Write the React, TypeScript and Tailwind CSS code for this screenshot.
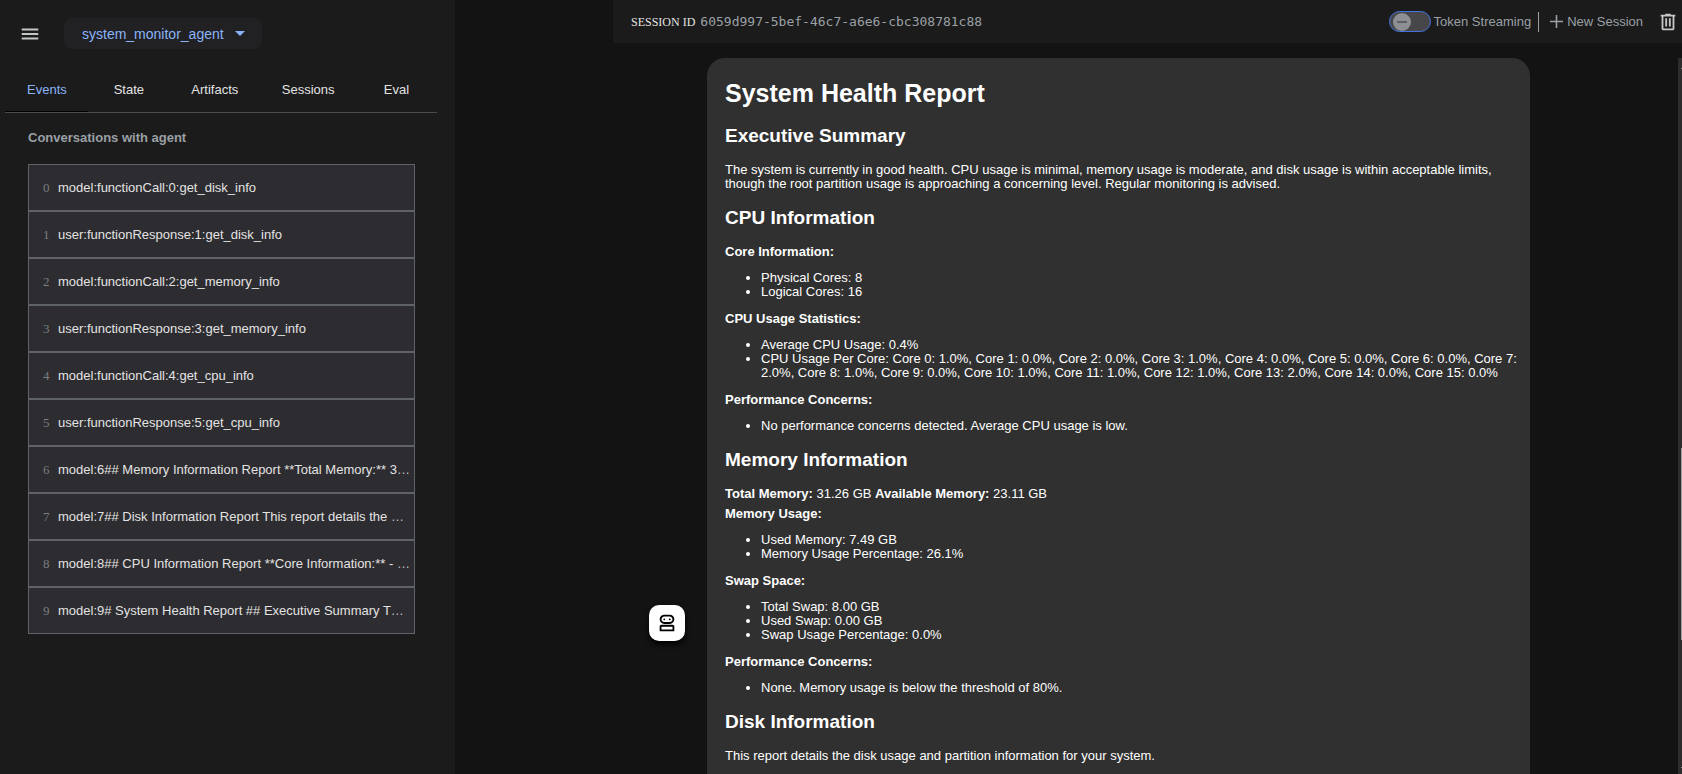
import type { ReactNode } from "react";

const tabs = ["Events", "State", "Artifacts", "Sessions", "Eval"];

const events = [
  { text: "model:functionCall:0:get_disk_info" },
  { text: "user:functionResponse:1:get_disk_info" },
  { text: "model:functionCall:2:get_memory_info" },
  { text: "user:functionResponse:3:get_memory_info" },
  { text: "model:functionCall:4:get_cpu_info" },
  { text: "user:functionResponse:5:get_cpu_info" },
  { text: "model:6## Memory Information Report **Total Memory:** 3", more: true },
  { text: "model:7## Disk Information Report This report details the ", more: true },
  { text: "model:8## CPU Information Report **Core Information:** - ", more: true },
  { text: "model:9# System Health Report ## Executive Summary T", more: true },
];

function Icon({ path, className }: { path: string; className: string }) {
  return (
    <svg viewBox="0 -960 960 960" fill="currentColor" className={className} aria-hidden="true">
      <path d={path} />
    </svg>
  );
}

const MENU = "M120-240v-90h720v90H120Zm0-195v-90h720v90H120Zm0-195v-90h720v90H120Z";
const DELETE =
  "M280-120q-33 0-56.5-23.5T200-200v-520h-40v-80h200v-40h240v40h200v80h-40v520q0 33-23.5 56.5T680-120H280Zm400-600H280v520h400v-520ZM360-280h80v-360h-80v360Zm160 0h80v-360h-80v360Z";
const ROBOT =
  "M160-120v-200q0-33 23.5-56.5T240-400h480q33 0 56.5 23.5T800-320v200H160Zm200-320q-83 0-141.5-58.5T160-640q0-83 58.5-141.5T360-840h240q83 0 141.5 58.5T800-640q0 83-58.5 141.5T600-440H360ZM240-200h480v-120H240v120Zm120-320h240q50 0 85-35t35-85q0-50-35-85t-85-35H360q-50 0-85 35t-35 85q0 50 35 85t85 35Zm28.5-91.5Q400-623 400-640t-11.5-28.5Q377-680 360-680t-28.5 11.5Q320-657 320-640t11.5 28.5Q343-600 360-600t28.5-11.5Zm240 0Q640-623 640-640t-11.5-28.5Q617-680 600-680t-28.5 11.5Q560-657 560-640t11.5 28.5Q583-600 600-600t28.5-11.5Z";

function Sidebar() {
  return (
    <aside className="w-[455px] shrink-0 bg-[#1b1b1b]">
      <div className="flex items-center pt-[18px] pl-[19px]">
        <button type="button" aria-label="Toggle side panel" className="text-[#c4c7c5]">
          <Icon path={MENU} className="size-[22px]" />
        </button>
        <div className="relative ml-[23px]">
          <select
            aria-label="Agent"
            className="h-[31px] w-[198px] appearance-none rounded-lg bg-[#212123] pl-[18px] text-sm text-[#8ab4f8] outline-none"
          >
            <option>system_monitor_agent</option>
          </select>
          <svg viewBox="0 0 10 5" className="pointer-events-none absolute top-[13px] right-[17px] h-[5px] w-[10px]" aria-hidden="true">
            <path d="M0 0h10L5 5z" fill="#8ab4f8" />
          </svg>
        </div>
      </div>

      <div role="tablist" className="mt-[18px] mr-[18px] ml-[5px] flex h-[46px] border-b border-[#4a4b4d]">
        {tabs.map((tab, i) => (
          <button
            key={tab}
            type="button"
            role="tab"
            aria-selected={i === 0}
            className={
              i === 0
                ? "min-w-[81px] border-b border-black px-[22px] pt-[2px] text-[#8ab4f8]"
                : "min-w-[81px] border-b border-transparent px-[22px] pt-[2px] text-[#e3e3e3]"
            }
          >
            {tab}
          </button>
        ))}
      </div>

      <h2 className="mt-[17px] ml-7 font-bold leading-4 text-[#9aa0a6]">Conversations with agent</h2>
      <ol className="mt-[18px] mr-10 ml-7 border border-[#5f6368] bg-[#2d2c30]">
        {events.map((event, i) => (
          <li key={event.text} className={i === 0 ? "" : "border-t-2 border-[#5f6368]"}>
            <button type="button" className="flex h-[45px] w-full items-center pl-[14px] text-left">
              <span className="w-[15px] shrink-0 font-['Liberation_Serif',serif] text-[#7b7d81]">{i}</span>
              <span className="whitespace-pre text-[#e3e3e3]">
                {event.text}
                {event.more && <span className="text-[#bdc1c6]">…</span>}
              </span>
            </button>
          </li>
        ))}
      </ol>
    </aside>
  );
}

function TopBar() {
  return (
    <header className="ml-[158px] flex h-[43px] shrink-0 items-center bg-[#1b1b1b] pr-[3px] pl-[18px] text-[#9aa0a6]">
      <span className="font-['Liberation_Serif',serif] text-xs text-[#e3e3e3]">SESSION ID</span>
      <span className="ml-[5px] font-['DejaVu_Sans_Mono',monospace]">6059d997-5bef-46c7-a6e6-cbc308781c88</span>
      <label className="ml-auto flex items-center gap-[3px]">
        <span className="relative flex h-[21px] w-[42px]">
          <input
            type="checkbox"
            role="switch"
            className="h-full w-full appearance-none rounded-full border border-[#4474e0] bg-[#47474a] outline-none"
          />
          <span className="pointer-events-none absolute top-[2px] left-1 flex size-[18px] items-center justify-center rounded-full bg-[#8e8f93]">
            <span className="h-[2px] w-[10px] bg-[#5f6065]" />
          </span>
        </span>
        Token Streaming
      </label>
      <span className="ml-[7px] h-5 w-px bg-[#9aa0a6]" />
      <button type="button" className="ml-[11px] flex items-center gap-1">
        <svg viewBox="0 0 13 13" className="size-[13px]" aria-hidden="true">
          <path d="M6.5 0v13M0 6.5h13" stroke="currentColor" strokeWidth="1.6" />
        </svg>
        New Session
      </button>
      <button type="button" aria-label="Delete session" className="ml-[14px] text-[#c4c7c5]">
        <Icon path={DELETE} className="size-[22px]" />
      </button>
    </header>
  );
}

function Section({ children }: { children: ReactNode }) {
  return <h2 className="my-4 text-[19px] leading-[22px] font-bold">{children}</h2>;
}

function Label({ children }: { children: ReactNode }) {
  return <p className="font-bold">{children}</p>;
}

function Bullets({ items }: { items: string[] }) {
  return (
    <ul className="mt-3 mb-[13px] list-disc pl-9">
      {items.map((item) => (
        <li key={item}>{item}</li>
      ))}
    </ul>
  );
}

function Report() {
  return (
    <article className="min-w-0 flex-1 rounded-t-[18px] bg-[#303030] pt-[21px] pr-2 pl-[18px] leading-[14px] text-white">
      <h1 className="mb-[18px] text-[25px] leading-[28px] font-bold">System Health Report</h1>
      <Section>Executive Summary</Section>
      <p>
        The system is currently in good health. CPU usage is minimal, memory usage is moderate, and disk usage is within
        acceptable limits, though the root partition usage is approaching a concerning level. Regular monitoring is advised.
      </p>
      <Section>CPU Information</Section>
      <Label>Core Information:</Label>
      <Bullets items={["Physical Cores: 8", "Logical Cores: 16"]} />
      <Label>CPU Usage Statistics:</Label>
      <Bullets
        items={[
          "Average CPU Usage: 0.4%",
          "CPU Usage Per Core: Core 0: 1.0%, Core 1: 0.0%, Core 2: 0.0%, Core 3: 1.0%, Core 4: 0.0%, Core 5: 0.0%, Core 6: 0.0%, Core 7: 2.0%, Core 8: 1.0%, Core 9: 0.0%, Core 10: 1.0%, Core 11: 1.0%, Core 12: 1.0%, Core 13: 2.0%, Core 14: 0.0%, Core 15: 0.0%",
        ]}
      />
      <Label>Performance Concerns:</Label>
      <Bullets items={["No performance concerns detected. Average CPU usage is low."]} />
      <Section>Memory Information</Section>
      <p className="mb-[6px]">
        <strong>Total Memory:</strong> 31.26 GB <strong>Available Memory:</strong> 23.11 GB
      </p>
      <Label>Memory Usage:</Label>
      <Bullets items={["Used Memory: 7.49 GB", "Memory Usage Percentage: 26.1%"]} />
      <Label>Swap Space:</Label>
      <Bullets items={["Total Swap: 8.00 GB", "Used Swap: 0.00 GB", "Swap Usage Percentage: 0.0%"]} />
      <Label>Performance Concerns:</Label>
      <Bullets items={["None. Memory usage is below the threshold of 80%."]} />
      <Section>Disk Information</Section>
      <p>This report details the disk usage and partition information for your system.</p>
    </article>
  );
}

export default function App() {
  return (
    <div className="flex h-screen overflow-hidden bg-[#131313] font-['Liberation_Sans',Arial,sans-serif] text-[13px]">
      <Sidebar />
      <main className="flex min-w-0 flex-1 flex-col">
        <TopBar />
        <div className="mt-[15px] flex min-h-0 flex-1">
          <div className="flex min-w-0 flex-1 overflow-hidden pr-[148px] pl-[194px]">
            <button
              type="button"
              aria-label="Agent response"
              className="mt-[547px] mr-[22px] flex size-9 shrink-0 items-center justify-center rounded-[10px] bg-white text-black shadow-md shadow-black"
            >
              <Icon path={ROBOT} className="size-[22px]" />
            </button>
            <Report />
          </div>
          <div className="relative w-1 shrink-0 bg-[#2c2c2c]" aria-hidden="true">
            <div className="absolute top-[10px] right-0 h-px w-px bg-[#9f9f9f]" />
            <div className="absolute top-[390px] right-0 h-[192px] w-px bg-[#9f9f9f]" />
            <div className="absolute right-0 bottom-[6px] h-px w-px bg-[#9f9f9f]" />
          </div>
        </div>
      </main>
    </div>
  );
}
